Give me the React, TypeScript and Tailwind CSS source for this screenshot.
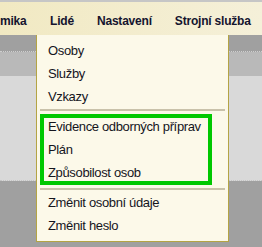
import React from "react";

const TOP_MENU = ["mika", "Lidé", "Nastavení", "Strojní služba"];

const GROUPS: string[][] = [
  ["Osoby", "Služby", "Vzkazy"],
  ["Evidence odborných příprav", "Plán", "Způsobilost osob"],
  ["Změnit osobní údaje", "Změnit heslo"],
];

export default function App() {
  return (
    <div className="relative w-[262px] h-[247px] overflow-hidden bg-[#a0a0a0] font-['Liberation_Sans',Arial,sans-serif]">
      {/* menu bar */}
      <div className="h-[35px] border-t-2 border-[#c6c6c6] bg-gradient-to-r from-[#f1e9c2] to-[#f5f0d9] flex items-center pt-[5px]">
        {TOP_MENU.map((label, idx) => (
          <span
            key={label}
            className={`text-[12px] font-bold tracking-[-0.2px] text-[#14142e] whitespace-nowrap ${
              idx === 0 ? "pr-[12px]" : "px-[11.5px]"
            }`}
          >
            {label}
          </span>
        ))}
      </div>

      {/* page behind the menu */}
      <div className="h-[17px] bg-[#a0a0a0] border-b border-dotted border-[#cfcfcf]" />
      <div className="h-[24px] bg-[#b9b9b9]" />
      <div className="h-[105px] bg-[#d9d9d9] border-b border-dotted border-[#c4c4c4]" />

      {/* dropdown */}
      <div className="absolute left-[36px] top-[35px] w-[193px] h-[207px] bg-[#fcf9e9] border border-t-0 border-[#b4a444] px-[3px] pt-[4px]">
        {GROUPS.map((group, gi) => (
          <React.Fragment key={gi}>
            {gi > 0 && (
              <div
                className={`h-[2px] bg-[#c9c2aa] ${
                  gi === 1 ? "mt-[1px] mb-[4px]" : "mt-[4px] mb-[1px]"
                }`}
              />
            )}
            {group.map((item) => (
              <div
                key={item}
                className="pl-[8px] text-[13px] leading-[23px] tracking-[-0.35px] text-[#15151d] whitespace-nowrap"
              >
                {item}
              </div>
            ))}
          </React.Fragment>
        ))}
      </div>

      {/* highlight frame */}
      <div className="absolute left-[40px] top-[114px] w-[172px] h-[71px] border-4 border-[#00c800]" />
    </div>
  );
}
